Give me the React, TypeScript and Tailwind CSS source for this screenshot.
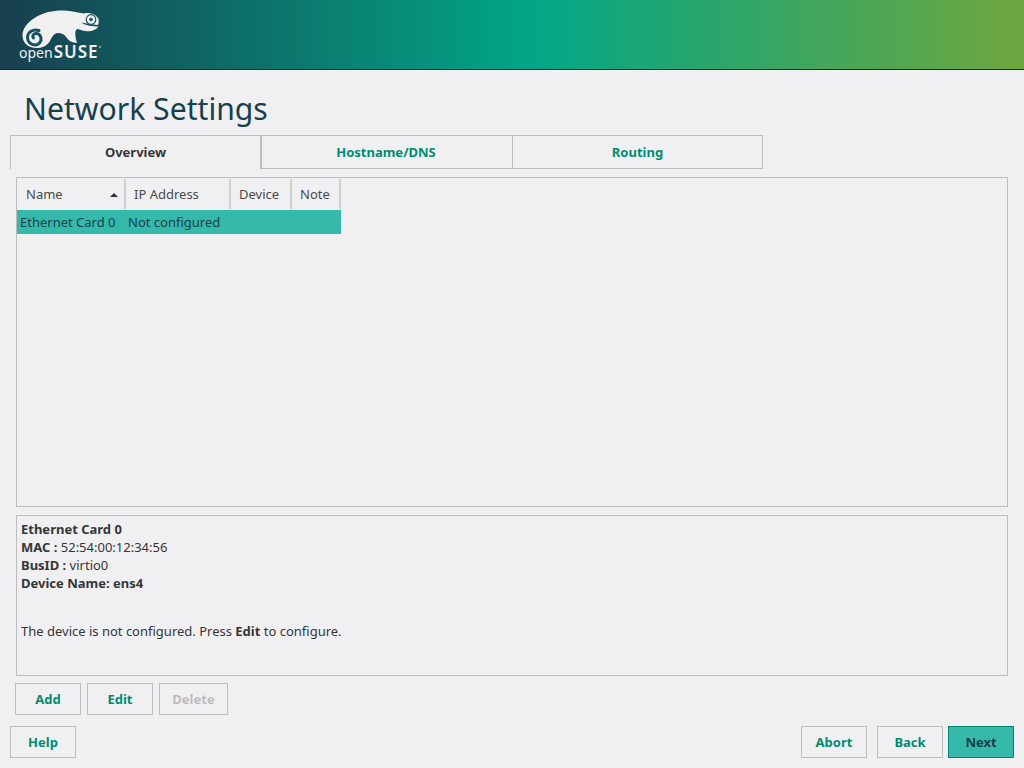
import React from "react";

const Logo = () => (
  <div className="relative w-[90px] h-[56px] ml-[17px] mt-[9px]">
    <svg width="90" height="44" viewBox="17 9 90 44" className="block">
      <path
        fill="#f0f0f0"
        d="M22.5 36 C22 28 29 21 36 17 C44 12 55 10 64 10.5 C71 11 78 12.5 84 13.5 C89 12 96 14 98.5 19 C99 22 98.5 24 98 25 C93 24.5 87 23.5 81.5 22.5 C85 25.5 93 26.5 98.5 26.5 C96 30.5 90 32 85 31 C81 30.5 79 29 77 29 C74.5 31 75 36 77 43 C72 42.5 69 41 66.5 37.5 C64.5 34.5 62 33 58 33 C54 33 52 37 50 41 C48 44.5 44 47.5 38 48 C28 48.5 23 43 22.5 36 Z"
      />
      <circle cx="91" cy="19.5" r="4.8" fill="none" stroke="#155a60" strokeWidth="1.2" />
      <circle cx="91" cy="19.5" r="1.8" fill="#155a60" />
      <path
        fill="none"
        stroke="#145060"
        strokeWidth="3"
        strokeLinecap="round"
        d="M39 30.5 C33 28.5 27.5 32 27.5 37.5 C27.5 42 31 45 35 45 C39 45 41.5 41.5 41 38 C40.5 35 38 33 35.5 33.5 C33 34 32 36.5 33.5 38"
      />
      <circle cx="100" cy="47" r="0.8" fill="#f0f0f0" />
    </svg>
    <div className="absolute left-[2px] top-[33px] flex items-baseline text-[#f0f0f0] font-['Noto_Sans',sans-serif] leading-[20px]">
      <span className="text-[14px] font-normal">open</span>
      <span className="text-[17px] font-semibold tracking-[1px] ml-[1px]">SUSE</span>
    </div>
  </div>
);

const Btn = ({
  children,
  w,
  disabled,
  primary,
}: {
  children: React.ReactNode;
  w: string;
  disabled?: boolean;
  primary?: boolean;
}) => (
  <div
    className={`h-[32px] pt-[1px] flex items-center justify-center text-[13px] font-bold border ${w} ${
      primary
        ? "bg-[#35b9ab] border-[#00856f] text-[#173f4f]"
        : disabled
        ? "border-[#bdbdbd] text-[#bcbcbc]"
        : "border-[#bdbdbd] text-[#008c72]"
    }`}
  >
    {children}
  </div>
);

const Th = ({ w, pad, children, arrow }: { w: string; pad: string; children: React.ReactNode; arrow?: boolean }) => (
  <div className={`${w} ${pad} pt-[2px] h-full relative flex items-center border-r-2 border-[#d0d0d0] text-[#4a4a4a]`}>
    {children}
    {arrow && (
      <svg width="8" height="4" viewBox="0 0 8 4" className="absolute right-[6px] top-[14px]">
        <path d="M0 4 L4 0 L8 4 Z" fill="#333" />
      </svg>
    )}
  </div>
);

export default function App() {
  return (
    <div className="w-[1024px] h-[768px] overflow-hidden flex flex-col bg-[#f0f0f3] font-['Noto_Sans',sans-serif] text-[13px] text-[#363636]">
      <div className="h-[70px] shrink-0 border-b border-[#0f2f3a] bg-[linear-gradient(90deg,#173f4f_0%,#02a687_52%,#6fa63f_100%)]">
        <Logo />
      </div>

      <h1 className="mt-[19px] ml-[24px] h-[46px] text-[30.15px] leading-[40px] font-normal text-[#173f4f]">Network Settings</h1>

      <div className="ml-[10px] flex h-[34px] text-[13px] font-bold">
        <div className="w-[250px] pt-[1px] flex items-center justify-center border-t border-l border-[#bdbdbd] text-[#363636]">Overview</div>
        <div className="w-[253px] pt-[1px] pr-[2px] flex items-center justify-center border border-l-2 border-[#bdbdbd] text-[#008c72]">Hostname/DNS</div>
        <div className="w-[250px] pt-[1px] flex items-center justify-center border border-l-0 border-[#bdbdbd] text-[#008c72]">Routing</div>
      </div>

      <div className="mt-[8px] ml-[16px] w-[992px] h-[330px] border border-[#bdbdbd]">
        <div className="w-[324px]">
          <div className="flex h-[32px] items-stretch pt-[1px] pb-[1px]">
            <Th w="w-[109px]" pad="pl-[9px]" arrow>Name</Th>
            <Th w="w-[105px]" pad="pl-[8px]">IP Address</Th>
            <Th w="w-[61px]" pad="pl-[8px]">Device</Th>
            <Th w="w-[49px]" pad="pl-[8px]">Note</Th>
          </div>
          <div className="h-[24px] pt-[1px] bg-[#35b9ab] flex items-center text-[#173f4f]">
            <span className="ml-[3px] w-[108px]">Ethernet Card 0</span>
            <span>Not configured</span>
          </div>
        </div>
      </div>

      <div className="mt-[8px] ml-[16px] w-[992px] h-[161px] border border-[#bdbdbd] px-[4px] pt-[4px] leading-[18px]">
        <div className="font-bold">Ethernet Card 0</div>
        <div><b>MAC :</b> 52:54:00:12:34:56</div>
        <div><b>BusID :</b> virtio0</div>
        <div className="font-bold">Device Name: ens4</div>
        <div className="mt-[30px]">The device is not configured. Press <b>Edit</b> to configure.</div>
      </div>

      <div className="mt-[7px] ml-[15px] flex gap-[6px]">
        <Btn w="w-[66px]">Add</Btn>
        <Btn w="w-[66px]">Edit</Btn>
        <Btn w="w-[69px]" disabled>Delete</Btn>
      </div>

      <div className="mt-[11px] mx-[10px] flex justify-between">
        <Btn w="w-[66px]">Help</Btn>
        <div className="flex">
          <Btn w="w-[66px]">Abort</Btn>
          <div className="w-[10px]" />
          <Btn w="w-[66px]">Back</Btn>
          <div className="w-[5px]" />
          <Btn w="w-[66px]" primary>Next</Btn>
        </div>
      </div>
    </div>
  );
}
